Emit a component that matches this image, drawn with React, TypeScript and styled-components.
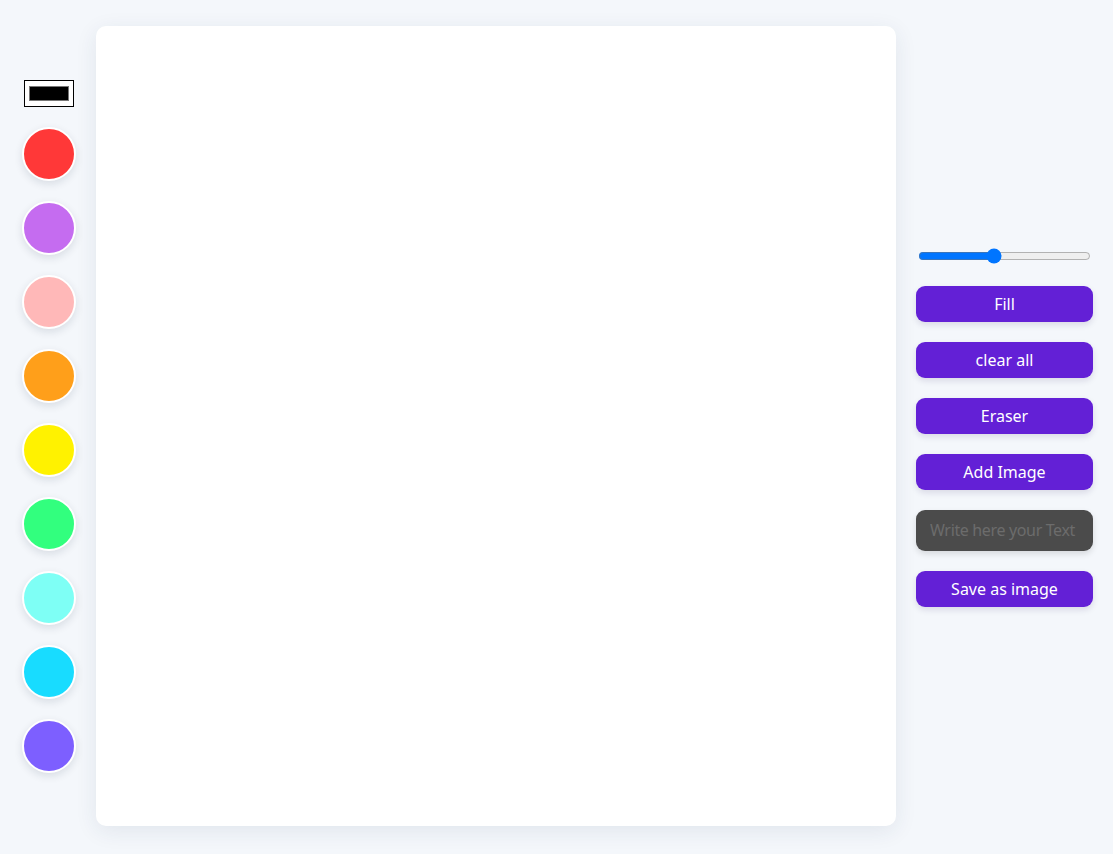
import React from "react";
import styled, { createGlobalStyle } from "styled-components";

const Global = createGlobalStyle`
  html, body { margin: 0; padding: 0; }
  body {
    background: #f4f7fb;
    font-family: "Noto Sans", "Open Sans", Arial, sans-serif;
  }
`;

const Page = styled.div`
  display: flex;
  align-items: center;
  padding: 26px 20px 28px 24px;
  box-sizing: border-box;
  min-height: 854px;
`;

const Palette = styled.div`
  width: 50px;
  display: flex;
  flex-direction: column;
  align-items: center;
  gap: 20px;
`;

const ColorInput = styled.input`
  width: 50px;
  height: 27px;
  margin: 0;
  padding: 1px 2px;
  border: 1px solid #000;
  background: #fff;
  box-sizing: border-box;
  cursor: pointer;
`;

const Swatch = styled.div<{ $color: string }>`
  width: 50px;
  height: 50px;
  border-radius: 50%;
  border: 2px solid #fff;
  background: ${(p) => p.$color};
  box-shadow: 0 3px 8px rgba(20, 30, 60, 0.12);
  flex-shrink: 0;
  cursor: pointer;
`;

const Board = styled.canvas`
  display: block;
  width: 800px;
  height: 800px;
  margin-left: 22px;
  background: #fff;
  border-radius: 10px;
  box-shadow: 0 5px 22px rgba(30, 50, 90, 0.09);
  flex-shrink: 0;
`;

const Controls = styled.div`
  width: 177px;
  margin-left: 20px;
  display: flex;
  flex-direction: column;
  gap: 20px;
`;

const Range = styled.input`
  width: 173px;
  margin: 2px;
  height: 16px;
  accent-color: #0075ff;
`;

const ActionButton = styled.button`
  height: 36px;
  width: 100%;
  border: none;
  border-radius: 9px;
  background: #6320d6;
  color: #fff;
  font-family: "Noto Sans", "Open Sans", Arial, sans-serif;
  font-size: 16px;
  box-shadow: 0 3px 6px rgba(30, 20, 80, 0.12);
  cursor: pointer;
`;

const TextInput = styled.input`
  height: 41px;
  width: 100%;
  box-sizing: border-box;
  border: none;
  border-radius: 9px;
  background: #4b4b4b;
  color: #fff;
  padding: 0 8px 0 14px;
  font-family: "Noto Sans", "Open Sans", Arial, sans-serif;
  font-size: 16px;
  letter-spacing: -0.35px;
  box-shadow: 0 3px 6px rgba(0, 0, 0, 0.12);
  outline: none;
  &::placeholder { color: #6c6c6c; }
`;

const colors = [
  "#ff3838",
  "#c56cf0",
  "#ffb8b8",
  "#ff9f1a",
  "#fff200",
  "#32ff7e",
  "#7efff5",
  "#18dcff",
  "#7d5fff",
];

export default function App() {
  return (
    <>
      <Global />
      <Page>
        <Palette>
          <ColorInput type="color" defaultValue="#000000" />
          {colors.map((c) => (
            <Swatch key={c} $color={c} />
          ))}
        </Palette>
        <Board width={800} height={800} />
        <Controls>
          <Range type="range" min={1} max={100} defaultValue={44} />
          <ActionButton>Fill</ActionButton>
          <ActionButton>clear all</ActionButton>
          <ActionButton>Eraser</ActionButton>
          <ActionButton>Add Image</ActionButton>
          <TextInput placeholder="Write here your Text" />
          <ActionButton>Save as image</ActionButton>
        </Controls>
      </Page>
    </>
  );
}
